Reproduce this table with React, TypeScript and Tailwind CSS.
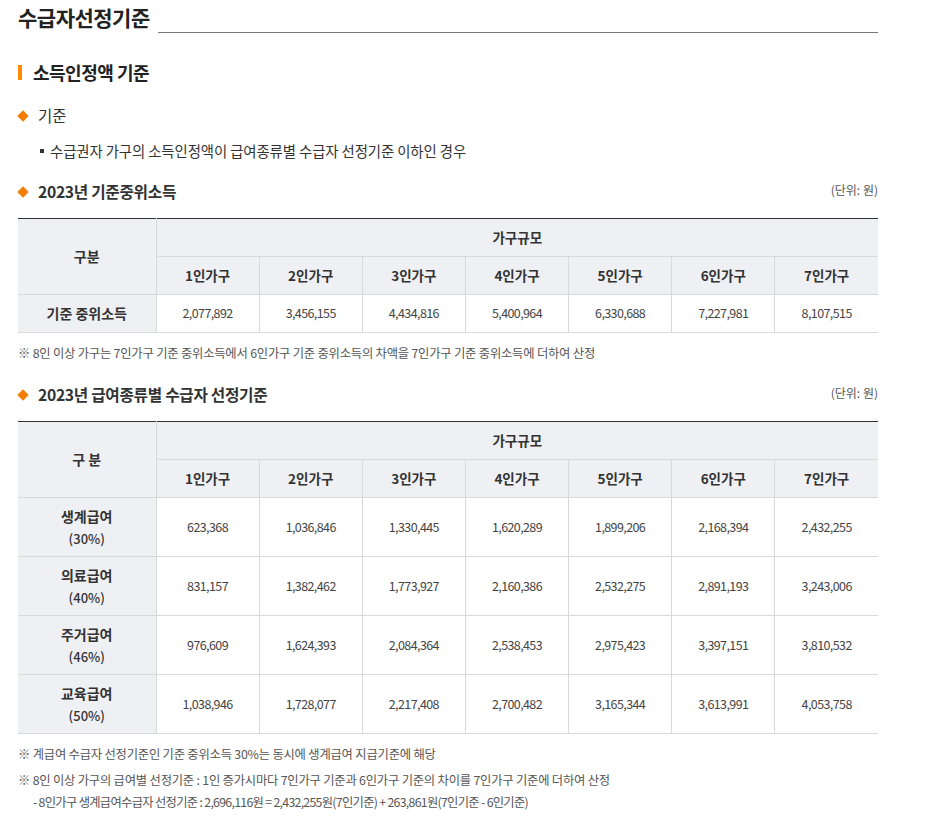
import React from "react";

const FONT = { fontFamily: '"Noto Sans CJK KR", "Noto Sans", sans-serif' };

const cols = ["1인가구", "2인가구", "3인가구", "4인가구", "5인가구", "6인가구", "7인가구"];

function Diamond() {
  return <span className="inline-block w-[8px] h-[8px] bg-[#f47c00] rotate-45 mx-[1px]" />;
}

function SubHead({ children, unit }: { children: React.ReactNode; unit?: boolean }) {
  return (
    <div className="flex items-center justify-between h-[22px]">
      <div className="flex items-center gap-[10px]">
        <Diamond />
        <span className="text-[15.7px] font-bold text-[#333] tracking-[-0.3px]">{children}</span>
      </div>
      {unit && <span className="text-[12px] text-[#555] -mt-[4px]">(단위: 원)</span>}
    </div>
  );
}

function HeadTable({ label }: { label: string }) {
  return (
    <>
      <colgroup>
        <col className="w-[138px]" />
        {cols.map((c) => (
          <col key={c} />
        ))}
      </colgroup>
      <thead>
        <tr className="h-[38px]">
          <th rowSpan={2} className="bg-[#eff0f3] border-r border-b border-[#d9d9d9] text-[14px] font-semibold text-[#333]">
            {label}
          </th>
          <th colSpan={7} className="bg-[#eff0f3] border-b border-[#d9d9d9] text-[13.5px] font-semibold text-[#333]">
            가구규모
          </th>
        </tr>
        <tr className="h-[38px]">
          {cols.map((c, i) => (
            <th
              key={c}
              className={`bg-[#eff0f3] border-b border-[#d9d9d9] text-[13.5px] font-semibold text-[#333] ${i < 6 ? "border-r" : ""}`}
            >
              {c}
            </th>
          ))}
        </tr>
      </thead>
    </>
  );
}

const rows2 = [
  ["생계급여", "(30%)", ["623,368", "1,036,846", "1,330,445", "1,620,289", "1,899,206", "2,168,394", "2,432,255"]],
  ["의료급여", "(40%)", ["831,157", "1,382,462", "1,773,927", "2,160,386", "2,532,275", "2,891,193", "3,243,006"]],
  ["주거급여", "(46%)", ["976,609", "1,624,393", "2,084,364", "2,538,453", "2,975,423", "3,397,151", "3,810,532"]],
  ["교육급여", "(50%)", ["1,038,946", "1,728,077", "2,217,408", "2,700,482", "3,165,344", "3,613,991", "4,053,758"]],
] as const;

const row1 = ["2,077,892", "3,456,155", "4,434,816", "5,400,964", "6,330,688", "7,227,981", "8,107,515"];

export default function App() {
  return (
    <div style={FONT} className="w-[925px] min-h-[822px] bg-white text-[#333]">
      <div className="pl-[18px] w-[878px]">
        {/* Title */}
        <div className="flex h-[33px]">
          <h1 className="text-[21px] font-semibold leading-[34px] text-[#222] tracking-[-0.5px] pr-[8px]">수급자선정기준</h1>
          <div className="flex-1 border-b border-[#777]" />
        </div>

        {/* Section heading */}
        <div className="mt-[27px] flex items-center h-[24px] gap-[11px]">
          <span className="w-[4px] h-[15px] bg-[#ff8a00]" />
          <span className="text-[18px] font-bold text-[#222] tracking-[-0.5px]">소득인정액 기준</span>
        </div>

        {/* 기준 */}
        <div className="mt-[21px] flex items-center h-[22px] gap-[10px]">
          <Diamond />
          <span className="text-[15.5px] text-[#333]">기준</span>
        </div>

        <div className="mt-[14px] flex items-center h-[20px] pl-[22px] gap-[6px]">
          <span className="w-[4px] h-[4px] bg-[#333]" />
          <span className="text-[14.4px] text-[#333] tracking-[-0.1px]">수급권자 가구의 소득인정액이 급여종류별 수급자 선정기준 이하인 경우</span>
        </div>

        <div className="mt-[20px]">
          <SubHead unit>2023년 기준중위소득</SubHead>
        </div>

        <table className="mt-[15px] w-[860px] table-fixed border-collapse border-t border-[#333] text-center">
          <HeadTable label="구분" />
          <tbody>
            <tr className="h-[38px]">
              <th className="bg-[#eff0f3] border-r border-b border-[#d9d9d9] text-[14px] font-semibold text-[#333]">
                기준 중위소득
              </th>
              {row1.map((v, i) => (
                <td
                  key={i}
                  className={`border-b border-[#d9d9d9] text-[12.5px] text-[#444] tracking-[-0.6px] ${i < 6 ? "border-r" : ""}`}
                >
                  {v}
                </td>
              ))}
            </tr>
          </tbody>
        </table>

        <p className="mt-[11px] leading-[18px] text-[12.3px] text-[#555] tracking-[-0.2px]">
          ※ 8인 이상 가구는 7인가구 기준 중위소득에서 6인가구 기준 중위소득의 차액을 7인가구 기준 중위소득에 더하여 산정
        </p>

        <div className="mt-[22px]">
          <SubHead unit>2023년 급여종류별 수급자 선정기준</SubHead>
        </div>

        <table className="mt-[15px] w-[860px] table-fixed border-collapse border-t border-[#333] text-center">
          <HeadTable label="구 분" />
          <tbody>
            {rows2.map(([name, pct, vals]) => (
              <tr key={name} className="h-[59px]">
                <th className="bg-[#eff0f3] border-r border-b border-[#d9d9d9] text-[14px] font-semibold text-[#333] leading-[22px]">
                  {name}
                  <br />
                  <span className="font-medium text-[13px]">{pct}</span>
                </th>
                {vals.map((v, i) => (
                  <td
                    key={i}
                    className={`border-b border-[#d9d9d9] text-[12.5px] text-[#444] tracking-[-0.6px] ${i < 6 ? "border-r" : ""}`}
                  >
                    {v}
                  </td>
                ))}
              </tr>
            ))}
          </tbody>
        </table>

        <p className="mt-[11px] leading-[18px] text-[12.3px] text-[#555] tracking-[-0.2px]">
          ※ 계급여 수급자 선정기준인 기준 중위소득 30%는 동시에 생계급여 지급기준에 해당
        </p>
        <p className="mt-[8px] leading-[18px] text-[12.3px] text-[#555] tracking-[-0.2px]">
          ※ 8인 이상 가구의 급여별 선정기준 : 1인 증가시마다 7인가구 기준과 6인가구 기준의 차이를 7인가구 기준에 더하여 산정
        </p>
        <p className="mt-[4px] leading-[18px] text-[12.3px] text-[#555] tracking-[-0.7px] pl-[15px]">
          - 8인가구 생계급여수급자 선정기준 : 2,696,116원 = 2,432,255원(7인기준) + 263,861원(7인기준 - 6인기준)
        </p>
      </div>
    </div>
  );
}
